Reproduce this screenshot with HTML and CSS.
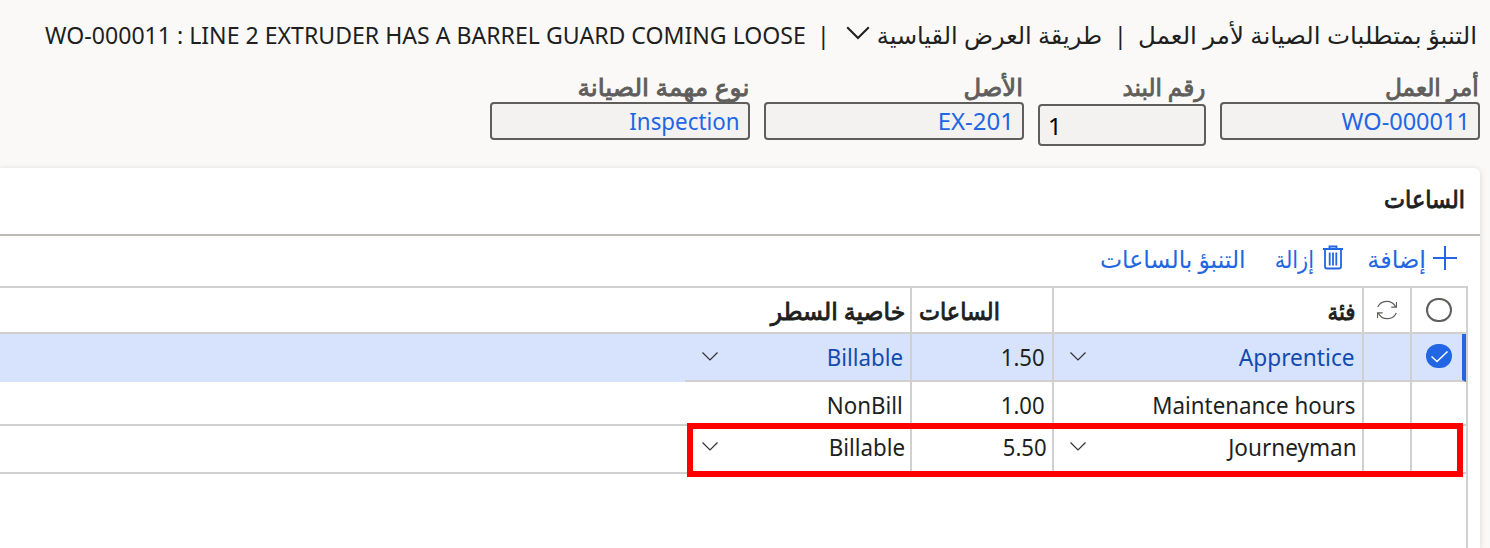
FILE: index.html
```
<!DOCTYPE html>
<html lang="ar" dir="rtl">
<head>
<meta charset="utf-8">
<title>التنبؤ بمتطلبات الصيانة</title>
<link rel="stylesheet" href="styles.css">
</head>
<body>
<header class="title-bar">
  <span class="t t-page">التنبؤ بمتطلبات الصيانة لأمر العمل</span>
  <span class="sep">|</span>
  <span class="t t-view">طريقة العرض القياسية</span>
  <svg class="view-chevron" width="24" height="14" viewBox="0 0 24 14"><path d="M1.200 1.200 12 12 22.800 1.200" fill="none" stroke="#201f1e" stroke-width="2"/></svg>
  <span class="sep">|</span>
  <span class="t t-wo" dir="ltr">WO-000011 : LINE 2 EXTRUDER HAS A BARREL GUARD COMING LOOSE</span>
</header>
<section class="fields">
  <div class="field"><label class="t semi l-order">أمر العمل</label><div class="box"><span class="t v-order" dir="ltr">WO-000011</span></div></div>
  <div class="field field-line"><label class="t semi l-line">رقم البند</label><div class="box box-number">1</div></div>
  <div class="field"><label class="t semi l-asset">الأصل</label><div class="box"><span class="t v-asset" dir="ltr">EX-201</span></div></div>
  <div class="field"><label class="t semi l-type">نوع مهمة الصيانة</label><div class="box"><span class="t narrow" dir="ltr">Inspection</span></div></div>
</section>
<main class="panel">
  <h2 class="panel-title"><span class="t semi t-hours">الساعات</span></h2>
  <div class="toolbar">
    <button class="tool"><svg class="plus" width="24" height="24" viewBox="0 0 24 24"><path d="M12 0v24M0 12h24" stroke="#2266e3" stroke-width="2"/></svg><span class="t">إضافة</span></button>
    <button class="tool"><svg class="trash" width="20" height="25" viewBox="0 0 20 25"><path d="M0 4h20M6.500 4V1.500h7V4M2 4v17.500q0 2 2 2h12q2 0 2-2V4M6.700 7.500v13M10 7.500v13M13.300 7.500v13" fill="none" stroke="#2266e3" stroke-width="1.800"/></svg><span class="t t-remove">إزالة</span></button>
    <button class="tool"><span class="t t-forecast">التنبؤ بالساعات</span></button>
  </div>
  <div class="grid">
    <div class="row head">
      <div class="cell c-check"><svg width="26" height="24" viewBox="0 0 26 24"><rect x="1" y="1" width="24" height="22" rx="11" fill="none" stroke="#605e5c" stroke-width="2"/></svg></div>
      <div class="cell c-sync"><svg width="20" height="20" viewBox="0 0 20 20"><path d="M.7 7A10 10 0 0 1 18.500 6.500M19.500 2v5.200h-5.200M19.300 13A10 10 0 0 1 1.500 13.500M.5 18v-5.200h5.200" fill="none" stroke="#605e5c" stroke-width="1.200"/></svg></div>
      <div class="cell c-name"><span class="t semi h-cat">فئة</span></div>
      <div class="cell c-hours"><span class="t semi h-hours">الساعات</span></div>
      <div class="cell c-prop"><span class="t semi h-prop">خاصية السطر</span></div>
      <div class="cell c-rest"></div>
    </div>
    <div class="row selected">
      <div class="cell c-check"><svg width="26" height="24" viewBox="0 0 26 24"><rect width="26" height="24" rx="12" fill="#2266e3"/><path d="M5.500 12.500 11 17.500 21.500 7.500" fill="none" stroke="#fff" stroke-width="1.500"/></svg></div>
      <div class="cell c-sync"></div>
      <div class="cell c-cat"><span class="t t-apprentice" dir="ltr">Apprentice</span><svg class="chev" width="16" height="9" viewBox="0 0 16 9"><path d="M.5.5 8 8 15.500.5" fill="none" stroke="#323130" stroke-width="1.200"/></svg></div>
      <div class="cell"><span class="t num">1.50</span></div>
      <div class="cell c-prop"><span class="t narrow">Billable</span><svg class="chev" width="16" height="9" viewBox="0 0 16 9"><path d="M.5.5 8 8 15.500.5" fill="none" stroke="#323130" stroke-width="1.200"/></svg></div>
      <div class="cell c-rest"></div>
    </div>
    <div class="row second">
      <div class="cell c-check"></div><div class="cell c-sync"></div>
      <div class="cell c-cat"><span class="t narrow">Maintenance hours</span></div>
      <div class="cell"><span class="t num">1.00</span></div>
      <div class="cell c-prop"><span class="t narrow">NonBill</span></div>
      <div class="cell c-rest"></div>
    </div>
    <div class="row third">
      <div class="cell c-check"></div><div class="cell c-sync"></div>
      <div class="cell c-cat"><span class="t t-journey">Journeyman</span><svg class="chev" width="16" height="9" viewBox="0 0 16 9"><path d="M.5.5 8 8 15.500.5" fill="none" stroke="#323130" stroke-width="1.200"/></svg></div>
      <div class="cell"><span class="t num">5.50</span></div>
      <div class="cell c-prop"><span class="t narrow">Billable</span><svg class="chev" width="16" height="9" viewBox="0 0 16 9"><path d="M.5.5 8 8 15.500.5" fill="none" stroke="#323130" stroke-width="1.200"/></svg></div>
      <div class="cell c-rest"></div>
      <div class="callout"></div>
    </div>
  </div>
</main>
</body>
</html>
```
FILE: styles.css
```
* { box-sizing: border-box; }
body {
  margin: 0;
  height: 548px;
  overflow: hidden;
  display: flex;
  flex-direction: column;
  background: #faf9f8;
  color: #201f1e;
  font: 24px/32px "Noto Sans", "DejaVu Sans", sans-serif;
}
.t { display: inline-block; white-space: nowrap; transform-origin: right center; }
.semi { font-weight: 400; -webkit-text-stroke: .9px currentColor; }
.narrow { transform: scaleX(.93); }
.num { transform: scaleX(.92); }

.title-bar { height: 73px; padding: 19px 13px 0 0; display: flex; align-items: flex-start; }
.sep { width: 13px; text-align: center; margin: 0 11px; }
.t-page { width: 339px; transform: scaleX(1.021); }
.t-view { width: 225px; margin-right: 1px; }
.view-chevron { margin: 7px 7px 0 0; }
.t-wo { transform: scaleX(.962); margin-right: 5px; }
.title-bar .view-chevron + .sep { margin: 0 16px 0 6px; }

.fields { display: flex; gap: 14px; padding-right: 10px; height: 95px; align-items: flex-start; }
.field { width: 260px; display: flex; flex-direction: column; }
.field-line { width: 168px; }
.field label { height: 29px; line-height: 28px; align-self: flex-start; margin-right: 1px; color: #605e5c; }
.l-order { transform: scaleX(.97); }
.l-line { transform: scaleX(.96); }
.l-asset { transform: scaleX(1.01); }
.l-type { transform: scaleX(1.04); }
.box { height: 38px; border: 2px solid #605e5c; border-radius: 4px; background: #f3f2f1; padding: 0 8px 0 9px; line-height: 34px; color: #2266e3; }
.box .narrow { margin-right: 1px; }
.v-order { transform: scaleX(.98); }
.box-number { height: 42px; margin-top: 2px; padding: 0 8px; color: #000; text-align: left; line-height: 39px; }

.panel { flex: 1; margin-right: 10px; background: #fff; border-radius: 0 6px 0 0; box-shadow: 0 1px 6px rgba(0, 0, 0, .15); }
.panel-title { margin: 0; height: 68px; padding: 15px 15px 0 0; border-bottom: 2px solid #bdb9b5; font: inherit; }
.t-hours { transform: scaleX(.93); }
.toolbar { height: 50px; display: flex; align-items: flex-start; padding: 7px 23px 0 0; }
.tool { display: flex; align-items: flex-start; border: 0; background: none; padding: 0; margin: 0 0 0 24px; font: inherit; color: #2266e3; }
.plus { margin: 3px 0 0 7px; }
.trash { margin: 2px 0 0 9px; }
.t-remove { width: 45px; transform: scaleX(.87); }
.t-forecast { transform: scaleX(.98); }

.grid { height: 262px; border-top: 2px solid #d2d0ce; border-right: 2px solid #d2d0ce; margin-right: 12px; }
.row { position: relative; display: grid; grid-template-columns: 56px 48px 310px 142px 225px 1fr; height: 48px; border-bottom: 2px solid #d2d0ce; }
.cell { border-left: 2px solid #d2d0ce; display: flex; align-items: center; justify-content: space-between; padding: 0 7px; }
.c-check, .c-sync { justify-content: center; padding: 0; }
.c-sync svg { margin-right: 1px; }
.c-cat { padding-left: 16px; }
.c-prop { border-left: 0; padding-left: 17px; }
.c-rest { border-left: 0; }
.head { height: 46px; }
.head .semi { padding-top: 1px; }
.c-name { padding-right: 6px; }
.c-hours { justify-content: flex-end; }
.h-cat { transform: scaleX(.89); }
.h-hours { transform: scaleX(.93); transform-origin: left center; }
.h-prop { transform: scaleX(.98); }
.head .c-prop { padding-right: 5px; }
.selected { background: #d7e3fc; color: #134bb0; border-right: 4px solid #2266e3; grid-template-columns: 52px 48px 310px 142px 225px 1fr; }
.selected .c-check { padding: 0 0 2px 4px; justify-content: flex-end; }
.selected .c-check svg { margin-left: 10px; }
.selected .num { color: #201f1e; }
.selected .c-rest { background: #d7e3fc; margin-bottom: -2px; }
.selected .chev { margin-bottom: 2px; }
.t-apprentice { transform: scaleX(.945); }
.second { height: 44px; }
.second .t { padding-top: 4px; }
.third .cell { padding-bottom: 4px; padding-right: 5px; }
.third .chev { margin-bottom: 2px; }
.t-journey { transform: scaleX(.94); }
.callout { position: absolute; top: -3px; right: 3px; width: 776px; height: 54px; border: 6px solid #f00; }
```
